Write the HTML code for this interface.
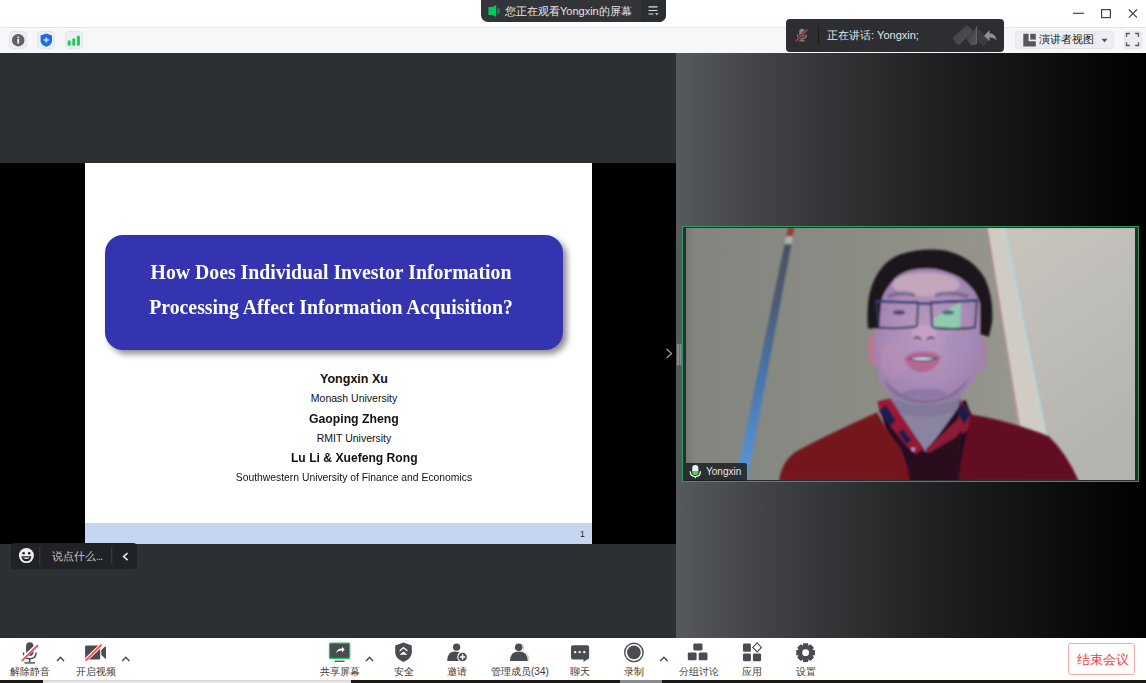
<!DOCTYPE html>
<html><head><meta charset="utf-8">
<style>
*{margin:0;padding:0;box-sizing:border-box}
html,body{width:1146px;height:683px;overflow:hidden;background:#fff;font-family:"Liberation Sans",sans-serif}
.abs{position:absolute}
#title{left:0;top:0;width:1146px;height:27px;background:#fff}
#tb{left:0;top:27px;width:1146px;height:26px;background:#f6f7f9;border-top:1px solid #e3e4e6}
#left{left:0;top:53px;width:676px;height:585px;background:#2d3032}
#band{left:0;top:163px;width:676px;height:381px;background:#000}
#slide{left:85px;top:163px;width:507px;height:381px;background:#fff;overflow:hidden}
#right{left:676px;top:53px;width:470px;height:585px;background:linear-gradient(to right,#56595d 0%,#3a3c3f 25%,#1f2022 55%,#000 100%)}
#bottom{left:0;top:638px;width:1146px;height:45px;background:#fff}
.ibox{top:31px;width:18px;height:18px;background:#eceef1;border:1px solid #e4e6e9;border-radius:3px}
#pill{left:481px;top:0;width:185px;height:21.5px;background:#323438;border-radius:0 0 7px 7px;color:#e8e8e8;font-size:11px}
#speak{left:786px;top:19px;width:218px;height:33px;background:#2c2e31;border-radius:4px;color:#e6e6e6;font-size:11px}
#view{left:1015px;top:31px;width:99px;height:18px;background:#eceef1;border:1px solid #e3e5e8;border-radius:3px;font-size:12px;color:#333}
#fs{left:1124px;top:31px;width:18px;height:18px;background:#eceef1;border:1px solid #e3e5e8;border-radius:3px}
.cjk{white-space:nowrap;line-height:1}
.ttl{left:131px;transform:scaleX(0.988);width:400px;text-align:center;font-family:"Liberation Serif",serif;font-weight:bold;font-size:20px;color:#fff;line-height:1;white-space:nowrap}
.au{left:154px;width:400px;text-align:center;line-height:1;color:#111;white-space:nowrap}
.au span{display:inline-block}
.b{font-weight:bold}
.lbl{top:666.5px;font-size:10px;color:#3a3a3a}
#endbtn{left:1068px;top:643px;width:67px;height:32px;border:1px solid #f4a9a9;border-radius:3px;color:#e8393a;font-size:12px}
</style></head><body>
<div id="title" class="abs"></div>
<div id="tb" class="abs"></div>
<div id="left" class="abs"></div>
<div id="band" class="abs"></div>
<div id="slide" class="abs"></div>

<!-- slide content -->
<div class="abs" style="left:105px;top:235px;width:458px;height:115px;background:#3434b0;border-radius:18px;box-shadow:4px 4px 6px rgba(0,0,0,0.45)"></div>
<div class="abs ttl" style="top:262px">How Does Individual Investor Information</div>
<div class="abs ttl" style="top:297px">Processing Affect Information Acquisition?</div>
<div class="abs au b" style="top:372.5px;font-size:12.5px"><span>Yongxin Xu</span></div>
<div class="abs au" style="top:392.5px;font-size:10.5px"><span>Monash University</span></div>
<div class="abs au b" style="top:412.5px;font-size:12.5px"><span style="transform:scaleX(0.98)">Gaoping Zheng</span></div>
<div class="abs au" style="top:432.5px;font-size:10.5px"><span>RMIT University</span></div>
<div class="abs au b" style="top:452px;font-size:12.5px"><span style="transform:scaleX(0.97)">Lu Li &amp; Xuefeng Rong</span></div>
<div class="abs au" style="top:471.5px;font-size:10.5px"><span style="transform:scaleX(0.985)">Southwestern University of Finance and Economics</span></div>
<div class="abs" style="left:85px;top:523px;width:507px;height:21px;background:#c6d6f0"></div>
<div class="abs" style="left:580px;top:530px;font-size:8.5px;color:#222;line-height:1">1</div>
<div id="right" class="abs"></div>
<div id="bottom" class="abs"></div>
<!-- side arrows -->
<svg class="abs" style="left:660px;top:340px" width="30" height="30">
 <path d="M6.6 9 L11.6 13.5 L6.6 18" stroke="#a0a0a0" stroke-width="1.2" fill="none"/>
 <rect x="17" y="3.8" width="2" height="21.4" fill="#8a8b8d"/>
 <rect x="19.6" y="3.8" width="1.8" height="21.4" fill="#8a8b8d"/>
</svg>
<!-- chat input -->
<div class="abs" style="left:11px;top:543px;width:126px;height:26px;background:#202225;border-radius:4px"></div>
<svg class="abs" style="left:11px;top:543px" width="126" height="26">
 <circle cx="15.4" cy="12.6" r="7.5" fill="#f0f0f0"/>
 <circle cx="12.6" cy="10.2" r="1.3" fill="#202225"/>
 <circle cx="18.2" cy="10.2" r="1.3" fill="#202225"/>
 <path d="M10.4 13.2 H20.4 Q20 18.2 15.4 18.2 Q10.8 18.2 10.4 13.2 Z" fill="#202225"/>
 <path d="M12 14.6 H18.8 Q18 16 15.4 16 Q12.8 16 12 14.6Z" fill="#f0f0f0"/>
 <rect x="28.3" y="4" width="1" height="17" fill="#3e4043"/>
 <rect x="100.3" y="4" width="1" height="17" fill="#3e4043"/>
 <path d="M116.6 10 L112.6 13.6 L116.6 17.2" stroke="#e8e8e8" stroke-width="1.6" fill="none"/>
</svg>
<div class="abs cjk" style="left:52px;top:551px;font-size:11px;color:#c8c8c8">说点什么<span style="letter-spacing:-0.6px;font-size:10px">...</span></div>

<!-- video -->
<div class="abs" style="left:682px;top:226px;width:457px;height:256px;border:1.5px solid #2e9b5e;background:#2a2c2f"></div>
<svg class="abs" style="left:686px;top:227.5px" width="449" height="252.5" viewBox="686 227.5 449 252.5">
<defs>
 <linearGradient id="lw" x1="0" x2="1" y1="0" y2="0">
  <stop offset="0" stop-color="#747876"/><stop offset="0.02" stop-color="#828580"/><stop offset="0.4" stop-color="#8b8c84"/><stop offset="0.75" stop-color="#979790"/><stop offset="1" stop-color="#a19e97"/>
 </linearGradient>
 <linearGradient id="rw" x1="0" y1="0" x2="0.4" y2="1">
  <stop offset="0" stop-color="#cac6bf"/><stop offset="1" stop-color="#b4b4b1"/>
 </linearGradient>
 <linearGradient id="pole" x1="0" y1="0" x2="0" y2="1">
  <stop offset="0" stop-color="#8a3e3e"/><stop offset="0.03" stop-color="#8a4040"/><stop offset="0.04" stop-color="#b8b4b4"/><stop offset="0.06" stop-color="#b0b0b4"/><stop offset="0.07" stop-color="#4a5262"/><stop offset="0.3" stop-color="#4c5c74"/><stop offset="0.6" stop-color="#4a76ae"/><stop offset="1" stop-color="#5a98d8"/>
 </linearGradient>
 <radialGradient id="face" cx="0.5" cy="0.5" r="0.6">
  <stop offset="0" stop-color="#b89ac0"/><stop offset="0.6" stop-color="#aa8cb8"/><stop offset="1" stop-color="#9a7eaa"/>
 </radialGradient>
 <linearGradient id="sw" x1="0" y1="0" x2="1" y2="0">
  <stop offset="0" stop-color="#7e1628"/><stop offset="0.45" stop-color="#6e1224"/><stop offset="0.55" stop-color="#4a0a1c"/><stop offset="1" stop-color="#701426"/>
 </linearGradient>
 <filter id="b1" x="-10%" y="-10%" width="120%" height="120%"><feGaussianBlur stdDeviation="0.8"/></filter>
 <filter id="b2" x="-20%" y="-20%" width="140%" height="140%"><feGaussianBlur stdDeviation="1.3"/></filter>
</defs>
<rect x="686" y="227.5" width="449" height="252.5" fill="url(#lw)"/>
<g filter="url(#b1)">
 <polygon points="986.5,227 1136,227 1136,481 1027,481" fill="url(#rw)"/>
 <polygon points="987,227 1004,227 1046,436 1020,430" fill="#d0ccc4"/>
 <path d="M1004 227 L1046 436" stroke="#b9d6dc" stroke-width="2"/>
 <path d="M987 227 L1020 430" stroke="#9a5a5a" stroke-width="0.9"/>
 <polygon points="788,227 794.5,227 747,481 735,481" fill="url(#pole)"/>
</g>
<g filter="url(#b2)">
 <!-- shirt dark -->
 <path d="M880 402 L966 400 L975 428 L972 481 L895 481 Z" fill="#221026"/>
 <!-- neck -->
 <path d="M893 380 L960 380 L962 402 L926 452 L889 402 Z" fill="#8a84a0"/>
 <path d="M892 398 Q925 412 960 398 L959 410 Q925 422 893 410 Z" fill="#7a6c90" opacity="0.5"/>
 <!-- ears -->
 <ellipse cx="874" cy="349" rx="6.5" ry="16" fill="#b87894"/>
 <ellipse cx="981" cy="354" rx="6" ry="17" fill="#a484a6"/>
 <!-- face -->
 <path d="M874 320 Q872 285 898 272 Q925 262 955 272 Q982 285 982 322 L981 352 Q979 378 965 390 Q948 401 925 400 Q902 401 886 390 Q876 378 875 352 Z" fill="url(#face)"/>
 <path d="M884 378 Q902 400 925 399 Q950 400 968 378 Q962 400 925 403 Q890 401 884 378Z" fill="#80628c" opacity="0.7"/>
 <!-- forehead highlight -->
 <ellipse cx="926" cy="284" rx="34" ry="12" fill="#c8acbc" opacity="0.85"/>
 <ellipse cx="893" cy="360" rx="13" ry="18" fill="#c494b4" opacity="0.35"/>
 <ellipse cx="958" cy="345" rx="13" ry="14" fill="#9c8cc4" opacity="0.35"/>
 <!-- hair -->
 <path d="M868 328 Q866 300 872 285 Q880 262 900 254 Q922 247 945 250 Q972 256 985 278 Q994 298 992 322 L989 336 L980 334 L980 303 Q976 288 960 277 Q940 267 926 268 Q905 268 895 278 Q882 292 881 303 L879 328 Z" fill="#1c181c"/>
 <!-- eyebrows -->
 <path d="M888 296 Q902 290 915 295" stroke="#6a5f80" stroke-width="4" fill="none" opacity="0.7"/>
 <path d="M935 295 Q950 290 968 296" stroke="#6a5f80" stroke-width="4" fill="none" opacity="0.7"/>
 <!-- eyes -->
 <ellipse cx="899" cy="312" rx="6" ry="2.4" fill="#3a3450" opacity="0.8"/>
 <ellipse cx="949" cy="312" rx="6" ry="2.4" fill="#3a3450" opacity="0.8"/>
 <!-- green reflection -->
 <path d="M934 318 L961 301 L960 328 L934 327 Z" fill="#86d8a8" opacity="0.8"/>
 <ellipse cx="948" cy="312" rx="6" ry="2.2" fill="#30506a" opacity="0.7"/>
 <!-- glasses frame -->
 <path d="M876 301 L918 302 L917 326 Q897 329 879 327 Z M931 302 L977 300 L975 327 Q953 330 932 327 Z" stroke="#2e3650" stroke-width="1.8" fill="none"/>
 <path d="M876 301 L918 302 M931 302 L977 300 M918 303 L931 303" stroke="#2a3c78" stroke-width="2.6" fill="none"/>
 <!-- nose -->
 <path d="M912 330 Q924 318 936 330 Q938 338 930 339 L918 339 Q910 338 912 330Z" fill="#c8a4c4" opacity="0.8"/>
 <path d="M914 338 Q918 335 921 339 M927 339 Q930 335 934 338" stroke="#3a2838" stroke-width="2" fill="none" opacity="0.85"/>
 <!-- mouth -->
 <path d="M904 358 Q912 350 923 351 Q935 350 941 357 Q936 371 922 372 Q909 371 904 358 Z" fill="#b46890"/>
 <path d="M907 358 Q922 353 939 358 Q922 364 907 358 Z" fill="#3c3050"/>
 <path d="M910 358 Q922 355 935 358 Q922 362 910 358 Z" fill="#c8d0f0"/>
 <!-- chin stubble -->
 <ellipse cx="925" cy="393" rx="22" ry="5" fill="#8070a0" opacity="0.6"/>
</g>
<g filter="url(#b1)">
 <!-- collar plaid left -->
 <path d="M877.5 401 L890 398 L923 449 L915 454 L904.5 444 L880 412 Z" fill="#9e1834"/>
 <path d="M879 410 L890 426 L896 420 L886 404 Z" fill="#1a1c4a"/>
 <path d="M898 432 L906 444 L912 440 L903 428 Z" fill="#1a1c4a"/>
 <!-- collar plaid right -->
 <path d="M960 399 L972 414 L968 430 L930 452 L925 450 L958 418 Z" fill="#8a1a36"/>
 <path d="M962 402 L971 414 L964 424 L957 412 Z" fill="#1c1c48"/>
 <circle cx="913" cy="449" r="1.8" fill="#a8b8e0"/>
 <!-- sweater left -->
 <path d="M779 481 Q782 458 800 449 Q830 433 877 412 Q888 432 900 446 Q908 462 910 481 Z" fill="#74121f"/>
 <!-- sweater right -->
 <path d="M971 414 Q985 416 1000 420 Q1030 428 1049 436 Q1066 452 1079 481 L958 481 Q962 450 971 414 Z" fill="#640f20"/>
 <path d="M910 481 Q905 460 915 455 L930 452 Q950 445 962 430 Q958 460 958 481 Z" fill="#2a0a1c"/>
</g>
</svg>
<!-- name label -->
<div class="abs" style="left:686px;top:463px;width:61px;height:17.5px;background:rgba(28,30,31,0.84);border-radius:0 2px 0 0"></div>
<svg class="abs" style="left:686px;top:463px" width="20" height="18">
 <defs><linearGradient id="mg" x1="0" y1="0" x2="0" y2="1"><stop offset="0.6" stop-color="#f0f0f0"/><stop offset="0.61" stop-color="#4ad25a"/></linearGradient></defs>
 <rect x="6.2" y="2" width="6.2" height="10" rx="3.1" fill="url(#mg)"/>
 <path d="M4.2 8.3 Q4.2 13.6 9.3 13.6 Q14.4 13.6 14.4 8.3 M9.3 13.6 V15.2" stroke="#f0f0f0" stroke-width="1.3" fill="none"/>
</svg>
<div class="abs" style="left:706px;top:467px;font-size:10px;line-height:1;color:#e8e8e8">Yongxin</div>


<!-- toolbar icons -->
<div class="abs ibox" style="left:9px"></div>
<div class="abs ibox" style="left:37px"></div>
<div class="abs ibox" style="left:65px"></div>
<svg class="abs" style="left:0;top:0" width="100" height="54">
  <circle cx="18.2" cy="40.2" r="6.2" fill="#5f6166"/>
  <rect x="17.3" y="36.6" width="1.8" height="1.4" fill="#f0f0f0"/>
  <rect x="17.3" y="38.8" width="1.8" height="4.8" fill="#f0f0f0"/>
  <path d="M46.3 33.6 L52 35.6 L52 40.5 C52 43.6 49.5 45.8 46.3 46.8 C43.1 45.8 40.6 43.6 40.6 40.5 L40.6 35.6 Z" fill="#1a6cf5"/>
  <path d="M46.3 37.4 V42.6 M43.7 40 H48.9" stroke="#cfe0ff" stroke-width="1.6"/>
  <rect x="67.7" y="40.4" width="3" height="5.3" rx="1" fill="#1fcc5a"/>
  <rect x="72.3" y="38.4" width="3" height="7.3" rx="1" fill="#1fcc5a"/>
  <rect x="76.9" y="35.8" width="3" height="9.9" rx="1" fill="#1fcc5a"/>
</svg>

<!-- top pill -->
<div id="pill" class="abs">
  <svg class="abs" style="left:7px;top:4px" width="14" height="14"><path d="M0.4 3 H4.2 Q6.5 2 8.2 1 V13 Q6.5 12 4.2 11 H0.4 Z" fill="#00c95e"/><ellipse cx="10.5" cy="7" rx="1.6" ry="3.6" fill="#1a7a4a"/></svg>
  <div class="abs cjk" style="left:24px;top:6px">您正在观看Yongxin的屏幕</div>
  <div class="abs" style="left:160px;top:0;width:25px;height:21.5px;background:#2b2e31;border-radius:0 0 7px 0"></div>
  <svg class="abs" style="left:167px;top:6px" width="11" height="10"><path d="M0.5 0.8H9.5M0.5 4.5H9.5M0.5 8H5.5" stroke="#e0e0e0" stroke-width="1.2"/><path d="M7 7.2H10.5L8.75 9.2Z" fill="#ddd"/></svg>
</div>

<!-- window controls -->
<svg class="abs" style="left:1060px;top:0" width="86" height="27">
  <path d="M13 13.3H24" stroke="#444" stroke-width="1.2"/>
  <rect x="41.6" y="9.6" width="8.8" height="8" fill="none" stroke="#444" stroke-width="1.2"/>
  <path d="M68.8 9.5L77 17.6M77 9.5L68.8 17.6" stroke="#444" stroke-width="1.2"/>
</svg>

<!-- speaking -->
<div id="speak" class="abs">
  <svg class="abs" style="left:9px;top:9px" width="14" height="14">
    <rect x="4.2" y="0.8" width="5.6" height="8.4" rx="2.8" fill="#7c7f84"/>
    <path d="M2.5 6.5 Q2.5 10.8 7 10.8 Q11.5 10.8 11.5 6.5 M7 10.8V12.6M4.3 12.8H9.7" stroke="#7c7f84" stroke-width="1.2" fill="none"/>
    <path d="M1 13L12.5 1.5" stroke="#2c2e31" stroke-width="2.6"/>
    <path d="M1 13L12.5 1.5" stroke="#d0433a" stroke-width="1.3"/>
  </svg>
  <div class="abs" style="left:32px;top:7px;width:1px;height:18px;background:#1a1b1d"></div>
  <div class="abs cjk" style="left:41px;top:11px">正在讲话: Yongxin;</div>
  <svg class="abs" style="left:0;top:0" width="218" height="33" viewBox="786 19 218 33">
    <defs><linearGradient id="dg" x1="0" y1="0" x2="1" y2="1"><stop offset="0" stop-color="#3a3c40"/><stop offset="1" stop-color="#55575b"/></linearGradient></defs>
    <path d="M966 25.5 Q967 25 968 26 L973 31 L960 44 Q958.5 45.5 957 44 L953.5 40 Q952 38.5 953.5 37 Z" fill="url(#dg)"/>
    <path d="M973 31 L976 28 V44.5 L973 45 Q972 46 971 45 L966 38.5 Z" fill="url(#dg)"/>
    <path d="M977.5 28 L990 40 L984 45.5 Q983 46.5 982 45.5 L977.5 41 Z" fill="#3a3c40"/>
    <rect x="976.1" y="26" width="0.9" height="18" fill="#6a6c70"/>
    <path d="M984 36 L989.5 30 V33.3 Q995.5 33.5 996.8 40.5 Q993.5 37 989.5 37.5 V41 Z" fill="#8e9094"/>
  </svg>
</div>

<!-- view button -->
<div id="view" class="abs">
  <svg class="abs" style="left:7px;top:1px" width="14" height="14"><path d="M0.3 0.8H5.6V8.3H12.8V13.5H0.3Z" fill="#55575c"/><rect x="7.2" y="0.8" width="5.6" height="5.8" fill="#55575c"/></svg>
  <div class="abs cjk" style="left:23px;top:2px;font-size:11px;color:#1a1a1a">演讲者视图</div>
  <svg class="abs" style="left:85px;top:6px" width="8" height="6"><path d="M0.5 0.8H6.5L3.5 4.5Z" fill="#55575c"/></svg>
</div>
<div id="fs" class="abs">
  <svg class="abs" style="left:0px;top:0px" width="16" height="16"><path d="M1.5 5V1.5H4.8M10.2 1.5H13.5V5M13.5 10.2V13.5H10.2M4.8 13.5H1.5V10.2" stroke="#55575c" stroke-width="1.3" fill="none"/></svg>
</div>

<!-- bottom toolbar -->
<svg class="abs" style="left:0;top:638px" width="830" height="30">
 <g fill="#4a4c51" stroke="none">
  <!-- mic -->
  <rect x="26.1" y="4.3" width="7.3" height="13.5" rx="3.65"/>
  <path d="M23.4 14.5 Q23.4 20.8 29.7 20.8 Q36 20.8 36 14.5" stroke="#4a4c51" stroke-width="1.5" fill="none"/>
  <rect x="29" y="20.8" width="1.4" height="3.5"/>
  <rect x="24.5" y="24.2" width="10.5" height="1.4"/>
  <!-- video -->
  <rect x="85.1" y="7.4" width="15.1" height="14.1" rx="1.3"/>
  <path d="M101.3 12 L105 8.6 Q106 8 106 9 V20 Q106 21 105 20.4 L101.3 17 Z"/>
  <!-- share screen -->
  <rect x="329.5" y="5.1" width="20.2" height="15.3" rx="1.2" stroke="#22c35e" stroke-width="1.3"/>
  <rect x="334.6" y="22.6" width="10" height="1.3"/>
  <!-- security shield -->
  <path d="M403.5 4.4 L411.8 7.6 V14.5 Q411.8 20.5 403.5 24 Q395.2 20.5 395.2 14.5 V7.6 Z"/>
  <!-- invite -->
  <circle cx="456.6" cy="9.2" r="3.6"/>
  <path d="M447.2 23 Q447.2 13.6 455.1 13.6 Q463 13.6 463 23 Z"/>
  <circle cx="462.6" cy="19" r="5.4" fill="#fff"/>
  <circle cx="462.6" cy="19" r="4.3"/>
  <!-- participants -->
  <circle cx="518.7" cy="9.2" r="3.8"/>
  <path d="M510 23 Q510 13.6 518.9 13.6 Q527.8 13.6 527.8 23 Z"/>
  <path d="M521.5 5.8 Q524.5 7.5 523.5 11.5 M526 14.5 Q529 17 529 23" stroke="#bfc0c3" stroke-width="0.8" fill="none"/>
  <!-- chat -->
  <path d="M573 7.3 H587.1 Q589.1 7.3 589.1 9.3 V19.5 Q589.1 21.5 587.1 21.5 H587 L583.5 24.1 V21.5 H573 Q571 21.5 571 19.5 V9.3 Q571 7.3 573 7.3 Z"/>
  <!-- record -->
  <circle cx="633.9" cy="14.4" r="9.2" fill="none" stroke="#4a4c51" stroke-width="1.4"/>
  <circle cx="633.9" cy="14.4" r="6.8"/>
  <!-- breakout -->
  <rect x="693.3" y="5.5" width="9.2" height="6.9" rx="1.3"/>
  <rect x="687.8" y="14.4" width="8.8" height="7.9" rx="1.3"/>
  <rect x="698.7" y="14.4" width="8.8" height="7.9" rx="1.3"/>
  <!-- apps -->
  <rect x="743" y="5.5" width="7.9" height="8.2" rx="1.3"/>
  <rect x="743" y="15.4" width="7.9" height="7.9" rx="1.3"/>
  <rect x="752.9" y="15.4" width="8.2" height="7.9" rx="1.3"/>
  <path d="M757.1 4.9 L761.4 9.4 L757.1 13.9 L752.8 9.4 Z" fill="none" stroke="#4a4c51" stroke-width="1.2"/>
  <!-- gear -->
  <path id="gear" d="M812.42 11.82 L814.97 12.21 L814.97 17.19 L812.42 17.58 L812.46 17.48 L813.99 19.57 L810.47 23.09 L808.38 21.56 L808.48 21.52 L808.09 24.07 L803.11 24.07 L802.72 21.52 L802.82 21.56 L800.73 23.09 L797.21 19.57 L798.74 17.48 L798.78 17.58 L796.23 17.19 L796.23 12.21 L798.78 11.82 L798.74 11.92 L797.21 9.83 L800.73 6.31 L802.82 7.84 L802.72 7.88 L803.11 5.33 L808.09 5.33 L808.48 7.88 L808.38 7.84 L810.47 6.31 L813.99 9.83 L812.46 11.92 Z M809.00 14.70 A3.4 3.4 0 1 0 802.20 14.70 A3.4 3.4 0 1 0 809.00 14.70 Z" fill-rule="evenodd"/>
 </g>
 <g fill="#fff">
  <!-- slashes white gaps -->
  <path d="M21.4 21.9 L37.9 6.6" stroke="#fff" stroke-width="3.6"/>
  <path d="M85.2 22.6 L101.8 6.6" stroke="#fff" stroke-width="3.6"/>
  <path d="M336 15 Q337.5 10.6 342 10.6 V8.7 L344.6 11.6 L342 14.4 V12.6 Q338.5 12.4 336 15 Z"/>
  <path d="M399.6 12 L403.5 8.8 L407.4 12 V13.8 L403.5 10.6 L399.6 13.8 Z M399.6 16.8 L403.5 13.6 L407.4 16.8 Z"/>
  <path d="M462.6 16.3 V21.7 M459.9 19 H465.3" stroke="#fff" stroke-width="1.5"/>
  <circle cx="575.2" cy="14.1" r="1.2"/><circle cx="579.7" cy="14.1" r="1.2"/><circle cx="584.3" cy="14.1" r="1.2"/>
 </g>
 <path d="M22.3 22.4 L37.4 7.7" stroke="#ff4b4b" stroke-width="1.9" stroke-linecap="round"/>
 <path d="M86.1 22.1 L101.1 7.1" stroke="#ff4b4b" stroke-width="1.9" stroke-linecap="round"/>
 <g stroke="#4a4c51" stroke-width="1.5" fill="none">
  <path d="M57 23 L60.5 19.3 L64 23"/>
  <path d="M122.2 23 L125.8 19.3 L129.4 23"/>
  <path d="M366 23 L369.5 19.3 L373 23"/>
  <path d="M660.2 23 L663.9 19.3 L667.6 23"/>
 </g>
</svg>
<div class="abs cjk lbl" style="left:10px">解除静音</div>
<div class="abs cjk lbl" style="left:76px">开启视频</div>
<div class="abs cjk lbl" style="left:320px">共享屏幕</div>
<div class="abs cjk lbl" style="left:394px">安全</div>
<div class="abs cjk lbl" style="left:447px">邀请</div>
<div class="abs cjk lbl" style="left:491px">管理成员(34)</div>
<div class="abs cjk lbl" style="left:570px">聊天</div>
<div class="abs cjk lbl" style="left:624px">录制</div>
<div class="abs cjk lbl" style="left:679px">分组讨论</div>
<div class="abs cjk lbl" style="left:742px">应用</div>
<div class="abs cjk lbl" style="left:796px">设置</div>
<div class="abs" id="endbtn"><div class="abs cjk" style="left:8px;top:9.5px;font-size:12.6px;color:#ee4242">结束会议</div></div>
<div class="abs" style="left:0;top:680px;width:1146px;height:3px;background:#1d1a18"></div>
<div class="abs" style="left:43px;top:680px;width:308px;height:3px;background:linear-gradient(#d4d4d4,#ececec)"></div>
<div class="abs" style="left:620px;top:680px;width:42px;height:3px;background:#8a8a8a"></div>
</body></html>
